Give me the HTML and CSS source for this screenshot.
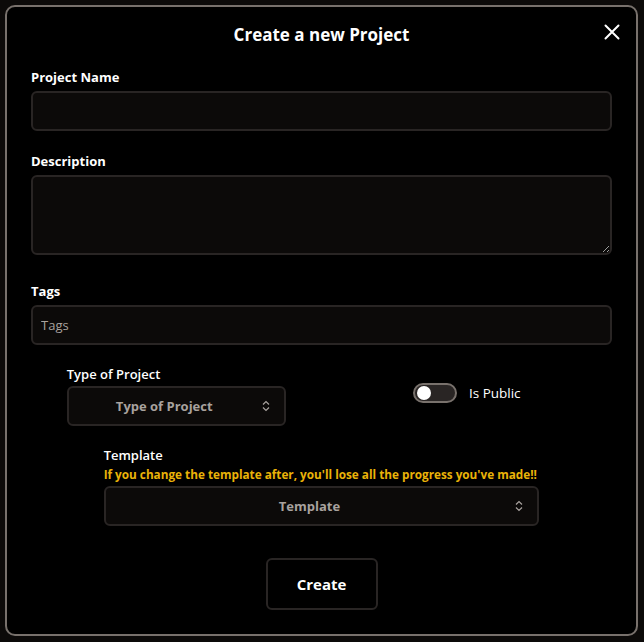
FILE: index.html
```html
<!DOCTYPE html>
<html>
<head>
<meta charset="utf-8">
<link rel="stylesheet" href="styles.css">
</head>
<body>
<div class="modal">
  <div class="header">
    <h2 class="title">Create a new Project</h2>
    <button class="close" aria-label="Close">
      <svg width="16" height="16" viewBox="0 0 16 16"><path d="M1.5 1.5 L14.5 14.5 M14.5 1.5 L1.5 14.5" stroke="#fff" stroke-width="2" stroke-linecap="round" fill="none"/></svg>
    </button>
  </div>
  <div class="field first">
    <label class="label">Project Name</label>
    <input class="input" type="text">
  </div>
  <div class="field">
    <label class="label">Description</label>
    <textarea class="input textarea"></textarea>
  </div>
  <div class="field tags">
    <label class="label">Tags</label>
    <input class="input" type="text" placeholder="Tags">
  </div>
  <div class="row">
    <div class="col">
      <label class="label sub">Type of Project</label>
      <div class="select small">
        <span>Type of Project</span>
        <svg class="chev" width="8" height="12" viewBox="0 0 8 12"><path d="M1 4.5 L4 1.5 L7 4.5 M1 7.5 L4 10.5 L7 7.5" stroke="#a8a29e" stroke-width="1.2" fill="none"/></svg>
      </div>
    </div>
    <div class="col center">
      <div class="toggle-wrap">
        <span class="toggle"><span class="knob"></span></span>
        <span class="toggle-label">Is Public</span>
      </div>
    </div>
  </div>
  <div class="template">
    <label class="label sub">Template</label>
    <p class="warn">If you change the template after, you'll lose all the progress you've made!!</p>
    <div class="select">
      <span>Template</span>
      <svg class="chev" width="8" height="12" viewBox="0 0 8 12"><path d="M1 4.5 L4 1.5 L7 4.5 M1 7.5 L4 10.5 L7 7.5" stroke="#a8a29e" stroke-width="1.2" fill="none"/></svg>
    </div>
  </div>
  <div class="actions">
    <button class="create">Create</button>
  </div>
</div>
</body>
</html>
```

FILE: styles.css
```css
* { box-sizing: border-box; }
html, body { margin: 0; padding: 0; }
body {
  background: #0c0a09;
  padding: 5px 6px 6px 5px;
  font-family: "Open Sans", "Noto Sans", sans-serif;
  color: #fff;
}
.modal {
  width: 633px;
  height: 631px;
  background: #000;
  border: 2px solid #78716c;
  border-radius: 10px;
  padding: 14px 24px 0 24px;
  display: flex;
  flex-direction: column;
}
.header {
  position: relative;
  height: 28px;
  display: flex;
  align-items: center;
  justify-content: center;
}
.title {
  margin: 0;
  font-size: 17px;
  font-weight: 700;
  line-height: 28px;
}
.close {
  position: absolute;
  right: -8px;
  top: 3px;
  background: none;
  border: 0;
  padding: 0;
  width: 16px;
  height: 16px;
  display: flex;
}
.field { display: flex; flex-direction: column; margin-top: 20px; }
.field.first { margin-top: 18px; }
.field.tags { margin-top: 26px; }
.label {
  font-size: 13px;
  font-weight: 700;
  line-height: 20px;
  margin-bottom: 4px;
}
.label.sub { font-weight: 600; }
.input {
  width: 100%;
  height: 40px;
  background: #0c0a09;
  border: 2px solid #292524;
  border-radius: 6px;
  color: #fff;
  font-family: inherit;
  font-size: 13px;
  padding: 0 8px;
  outline: none;
}
.input::placeholder { color: #a8a29e; }
.textarea {
  height: 80px;
  resize: vertical;
  display: block;
}
.row {
  display: grid;
  grid-template-columns: 1fr 1fr;
  margin-top: 19px;
}
.col { display: flex; flex-direction: column; align-items: center; }
.col .label { width: 219px; margin-bottom: 2px; }
.col.center { justify-content: flex-start; padding-top: 19px; }
.select {
  position: relative;
  width: 100%;
  height: 40px;
  background: #0c0a09;
  border: 2px solid #292524;
  border-radius: 6px;
  display: flex;
  align-items: center;
  justify-content: center;
  padding-right: 24px;
  font-size: 13px;
  font-weight: 700;
  color: #a8a29e;
}
.select.small { width: 219px; }
.chev { position: absolute; right: 14px; top: 12px; }
.toggle-wrap { display: flex; align-items: center; gap: 12px; }
.toggle {
  width: 44px;
  height: 20px;
  border-radius: 10px;
  background: #292524;
  border: 2px solid #78716c;
  display: flex;
  align-items: center;
  padding-left: 2px;
}
.knob { width: 14px; height: 14px; border-radius: 50%; background: #fff; }
.toggle-label { font-size: 13.5px; font-weight: 400; }
.template {
  width: 75%;
  align-self: center;
  margin-top: 19px;
  display: flex;
  flex-direction: column;
}
.template .label { margin-bottom: 0; }
.warn {
  margin: 0 0 3px;
  font-size: 11.75px;
  font-weight: 700;
  line-height: 18px;
  color: #eab308;
  white-space: nowrap;
}
.actions { display: flex; justify-content: center; margin-top: 32px; }
.create {
  width: 112px;
  height: 52px;
  background: #000;
  border: 2px solid #292524;
  border-radius: 6px;
  color: #fff;
  font-family: inherit;
  font-size: 15px;
  font-weight: 700;
}
```
